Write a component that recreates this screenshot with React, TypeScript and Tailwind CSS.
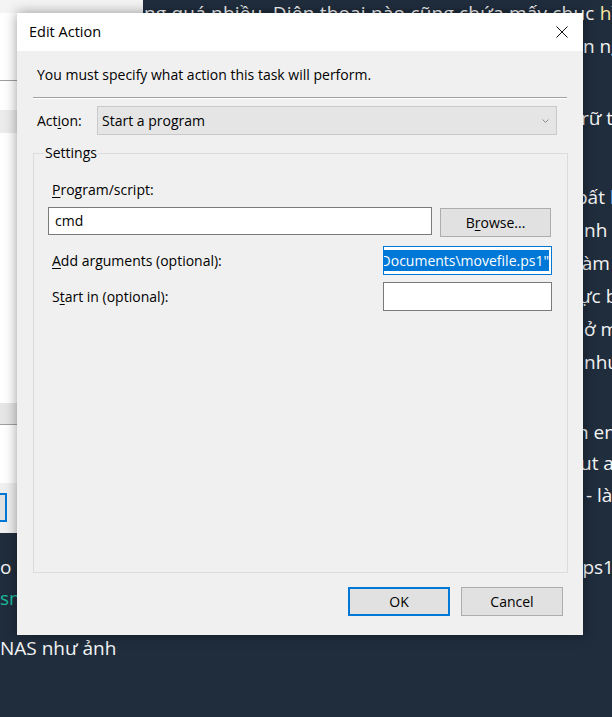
const ui = "font-['Open_Sans',_'Noto_Sans',_sans-serif]";

type Line = { cls: string; content: React.ReactNode };

// background article, only the edges show around the dialog
const lines: Line[] = [
  {
    cls: "mt-[-3px] pl-[144px] tracking-[0.2px]",
    content: (
      <>
        ng quá nhiều. Điện thoại nào cũng chứa mấy chục <span className="text-[#f7e7a1]">hình</span>
      </>
    ),
  },
  { cls: "mt-[1px] pl-[583px]", content: "n ngày" },
  { cls: "mt-[40px] pl-[581px]", content: "rữ trên" },
  {
    cls: "mt-[47px] pl-[576px]",
    content: (
      <>
        bất <span className="text-[#bfe3f7]">l</span>
      </>
    ),
  },
  { cls: "mt-[1px] pl-[584px]", content: "nh các" },
  { cls: "mt-[1px] pl-[577px]", content: "làm" },
  { cls: "mt-[1px] pl-[579px]", content: "ực b" },
  { cls: "mt-[1px] pl-[584px]", content: "ở m" },
  { cls: "mt-[1px] pl-[584px]", content: "nhu" },
  { cls: "mt-[38px] pl-[577px]", content: "n em" },
  { cls: "mt-[-1px] pl-[580px]", content: "ut at" },
  { cls: "mt-[0px] pl-[586px]", content: "- làm" },
  {
    cls: "mt-[40px] flex",
    content: (
      <>
        <span>o</span>
        <span className="ml-[571px]">ps1</span>
      </>
    ),
  },
  { cls: "mt-[-1px] text-[#1abc9c]", content: "sn" },
  { cls: "mt-[18px]", content: "NAS như ảnh" },
];

function Ul({ children }: { children: React.ReactNode }) {
  return <span className="underline underline-offset-[2px]">{children}</span>;
}

function BackWindow() {
  return (
    <div className="absolute left-0 top-0 flex h-[533px] w-[143px] flex-col bg-white">
      <div className="h-[13px] bg-[#f4f4f4]" />
      <div className="h-[67px]" />
      <div className="h-px bg-[#a0a0a0]" />
      <div className="h-[29px]" />
      <div className="h-[23px] bg-[#ececec]" />
      <div className="h-[270px]" />
      <div className="h-[21px] bg-[#e6e6e6]" />
      <div className="h-px bg-[#a0a0a0]" />
      <div className="h-[58px]" />
      <div className="flex-1 bg-[#f0f0f0] pt-[10px]">
        <div className="ml-[-60px] h-[29px] w-[67px] border-2 border-[#0078d7] bg-[#e1e1e1]" />
      </div>
    </div>
  );
}

function Dialog() {
  return (
    <div
      className={`absolute left-[17px] top-[13px] flex h-[622px] w-[566px] flex-col bg-[#f0f0f0] text-[14px] leading-[18px] text-black shadow-[0_0_12px_rgba(0,0,0,0.4)] ${ui}`}
    >
      <div className="flex h-[38px] items-center justify-between bg-white pl-[12px] pr-[15px]">
        <span className="text-[14.5px]">Edit Action</span>
        <svg width="12" height="12" viewBox="0 0 12 12">
          <path d="M0.5 0.5 L11.5 11.5 M11.5 0.5 L0.5 11.5" stroke="#111" strokeWidth="1" />
        </svg>
      </div>

      <div className="ml-[20px] mt-[15px]">You must specify what action this task will perform.</div>
      <div className="mx-[16px] mt-[13px] border-t border-b border-t-[#a0a0a0] border-b-white" />

      <div className="mt-[7px] flex h-[29px] items-center">
        <span className="ml-[20px] w-[60px]">
          Act<Ul>i</Ul>on:
        </span>
        <div className="flex h-[29px] w-[460px] items-center justify-between border border-[#c9c9c9] bg-[#e5e5e5] pl-[4px] pr-[7px]">
          <span>Start a program</span>
          <svg width="7" height="4" viewBox="0 0 7 4">
            <path d="M0.5 0.5 L3.5 3.5 L6.5 0.5" fill="none" stroke="#8a8a8a" strokeWidth="1" />
          </svg>
        </div>
      </div>

      <div className="relative ml-[16px] mt-[18px] flex h-[420px] w-[535px] flex-col border border-[#dcdcdc]">
        <span className="absolute left-[10px] top-[-10px] bg-[#f0f0f0] px-[1px]">Settings</span>

        <div className="ml-[18px] mt-[27px]">
          <Ul>P</Ul>rogram/script:
        </div>
        <div className="mt-[8px] flex items-start">
          <div className="ml-[14px] flex h-[28px] w-[384px] items-center border border-[#7a7a7a] bg-white pl-[6px]">
            cmd
          </div>
          <div className="ml-[8px] mt-px flex h-[29px] w-[111px] items-center justify-center border border-[#adadad] bg-[#e1e1e1]">
            B<Ul>r</Ul>owse...
          </div>
        </div>

        <div className="mt-[9px] flex h-[29px] items-center justify-between pr-[15px]">
          <span className="ml-[18px]">
            <Ul>A</Ul>dd arguments (optional):
          </span>
          <div className="flex h-[29px] w-[169px] items-center justify-end overflow-hidden border border-[#0078d7] bg-white pr-[2px]">
            <span className="whitespace-nowrap bg-[#0078d7] leading-[21px] text-white">
              "C:\Users\Admin\Documents\movefile.ps1"
            </span>
          </div>
        </div>

        <div className="mt-[7px] flex h-[29px] items-center justify-between pr-[15px]">
          <span className="ml-[18px]">
            S<Ul>t</Ul>art in (optional):
          </span>
          <div className="h-[29px] w-[169px] border border-[#7a7a7a] bg-white" />
        </div>
      </div>

      <div className="mt-[14px] flex justify-end gap-[11px] pr-[20px]">
        <div className="flex h-[29px] w-[102px] items-center justify-center border-2 border-[#0078d7] bg-[#e1e1e1]">
          OK
        </div>
        <div className="flex h-[29px] w-[102px] items-center justify-center border border-[#adadad] bg-[#e1e1e1]">
          Cancel
        </div>
      </div>
    </div>
  );
}

export default function App() {
  return (
    <div className="relative h-[717px] w-[612px] overflow-hidden bg-[#202d3d]">
      <div className="flex flex-col whitespace-nowrap font-['Open_Sans',_sans-serif] text-[19px] leading-[32px] text-[#f4f4f4]">
        {lines.map((l, i) => (
          <div key={i} className={l.cls}>
            {l.content}
          </div>
        ))}
      </div>
      <BackWindow />
      <Dialog />
    </div>
  );
}
